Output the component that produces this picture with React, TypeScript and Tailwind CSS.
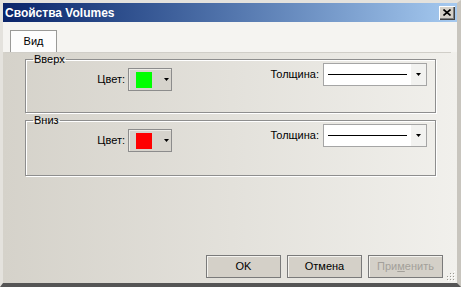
import React from 'react';

const font = { fontFamily: '"Liberation Sans", Arial, sans-serif' };

function Arrow() {
  return (
    <svg width="5" height="3" viewBox="0 0 5 3" className="block">
      <path d="M0 0h5L2.5 3z" fill="#000" />
    </svg>
  );
}

function ColorCombo({ color }: { color: string }) {
  return (
    <div className="w-[44px] h-[23px] border border-[#8c8c8c] bg-[#d6d3cc] shadow-[inset_1px_1px_0_#ecebe6] flex items-center pl-[7px]">
      <div className="w-[16px] h-[16px]" style={{ background: color }} />
      <div className="ml-[12px]">
        <Arrow />
      </div>
    </div>
  );
}

function WidthCombo() {
  return (
    <div className="w-[104px] h-[23px] border border-[#a5a5a5] bg-white flex items-stretch">
      <div className="flex-1 flex items-center pl-[4px] pr-[4px]">
        <div className="w-[79px] h-[1px] bg-black" />
      </div>
      <div className="w-[15px] bg-[#f2f2f0] flex items-center justify-center">
        <Arrow />
      </div>
    </div>
  );
}

function Group({ title, color, h }: { title: string; color: string; h: string }) {
  return (
    <fieldset className={`${h} border border-[#8e8e8e] shadow-[1px_1px_0_#fff,inset_1px_1px_0_#fff] ml-[20px] mr-[15px]`}>
      <legend className="ml-[7px] px-[1px] text-[11px] leading-[12px] text-black">{title}</legend>
      <div className="flex items-start">
        <div className="w-[146px] mt-[3px] flex items-center justify-end gap-[3px]">
          <span className="text-[11px] text-black">Цвет:</span>
          <ColorCombo color={color} />
        </div>
        <div className="ml-auto mr-[8px] mt-[-2px] flex items-center gap-[4px]">
          <span className="text-[11px] text-black">Толщина:</span>
          <WidthCombo />
        </div>
      </div>
    </fieldset>
  );
}

function Btn({ children, disabled }: { children: React.ReactNode; disabled?: boolean }) {
  return (
    <div
      className={`w-[75px] h-[23px] border border-[#7a7a7a] bg-[#d4d0c8] shadow-[inset_1px_1px_0_#f4f3ef] flex items-center justify-center text-[11px] ${
        disabled ? 'text-[#a3a09a]' : 'text-black'
      }`}
    >
      {children}
    </div>
  );
}

export default function App() {
  return (
    <div
      className="relative w-[461px] h-[287px] bg-[#d4d0c8] flex flex-col border-t-[3px] border-l-[3px] border-r-[4px] border-b-[4px] border-t-[#e4e2dd] border-l-[#e4e2dd] border-r-[#c8c5be] border-b-[#555555] shadow-[inset_1px_1px_0_#fff]"
      style={font}
    >
      {/* title bar */}
      <div className="h-[19px] shrink-0 bg-linear-to-r from-[#0a246a] to-[#a6caf0] flex items-center pl-[2px] pr-[2px]">
        <span className="text-white font-bold text-[12px] leading-none">Свойства Volumes</span>
        <div className="ml-auto w-[16px] h-[14px] bg-[#d4d0c8] shadow-[inset_1px_1px_0_#fff,inset_-1px_-1px_0_#404040,inset_-2px_-2px_0_#808080] flex items-center justify-center">
          <svg width="8" height="7" viewBox="0 0 8 7">
            <path d="M0.5 0.5L7.5 6.5M7.5 0.5L0.5 6.5" stroke="#000" strokeWidth="1.6" />
          </svg>
        </div>
      </div>

      <div className="flex-1 flex flex-col bg-linear-to-r from-[#d5d2ca] to-[#f1f0ec]">
        {/* tab strip */}
        <div className="h-[30px] shrink-0 bg-[#f5f4f1] flex items-end pl-[7px]">
          <div className="w-[47px] h-[22px] bg-[#fdfdfd] border border-b-0 border-[#9a9a98] flex items-center justify-center text-[11px] text-black">
            Вид
          </div>
        </div>

        {/* tab page */}
        <div className="ml-[2px] mr-[6px] border-t border-[#d0cec8] flex flex-col gap-[1px]">
          <Group title="Вверх" color="#00ff00" h="h-[60px]" />
          <Group title="Вниз" color="#ff0000" h="h-[62px]" />
        </div>

        <div className="flex-1" />

        <div className="flex justify-end gap-[6px] pr-[14px] pb-[5px]">
          <Btn>OK</Btn>
          <Btn>Отмена</Btn>
          <Btn disabled>
            При<span className="underline">м</span>енить
          </Btn>
        </div>
      </div>

      {/* size grip */}
      <svg className="absolute right-[1px] bottom-[2px]" width="10" height="10" viewBox="0 0 10 10">
        {[
          [8, 0], [8, 3], [5, 3], [8, 6], [5, 6], [2, 6], [8, 9], [5, 9], [2, 9],
        ].map(([x, y], i) => (
          <g key={i}>
            <rect x={x} y={y - 0} width="1" height="1" fill="#ffffff" />
            <rect x={x - 1} y={y - 1} width="1" height="1" fill="#9a9892" />
          </g>
        ))}
      </svg>
    </div>
  );
}
